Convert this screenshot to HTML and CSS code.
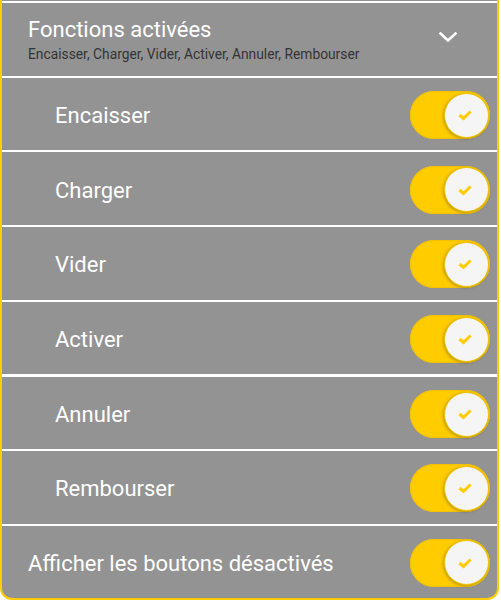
FILE: index.html
```html
<!DOCTYPE html>
<html lang="fr">
<head>
<meta charset="utf-8">
<link rel="stylesheet" href="styles.css">
</head>
<body>
<div class="panel">
  <div class="row header">
    <div class="head-text">
      <div class="title">Fonctions activées</div>
      <div class="subtitle">Encaisser, Charger, Vider, Activer, Annuler, Rembourser</div>
    </div>
    <svg class="chevron" width="24" height="24" viewBox="0 0 24 24"><path d="M4.5 8.5 L12 15.5 L19.5 8.5" fill="none" stroke="#fff" stroke-width="2.6" stroke-linecap="square"/></svg>
  </div>
  <div class="row sub"><span class="label">Encaisser</span><div class="toggle"><div class="thumb"><svg width="16" height="12" viewBox="0 0 16 12"><path d="M2.5 6 L6.5 9.5 L13.5 2.5" fill="none" stroke="#ffcc00" stroke-width="3"/></svg></div></div></div>
  <div class="row sub"><span class="label">Charger</span><div class="toggle"><div class="thumb"><svg width="16" height="12" viewBox="0 0 16 12"><path d="M2.5 6 L6.5 9.5 L13.5 2.5" fill="none" stroke="#ffcc00" stroke-width="3"/></svg></div></div></div>
  <div class="row sub"><span class="label">Vider</span><div class="toggle"><div class="thumb"><svg width="16" height="12" viewBox="0 0 16 12"><path d="M2.5 6 L6.5 9.5 L13.5 2.5" fill="none" stroke="#ffcc00" stroke-width="3"/></svg></div></div></div>
  <div class="row sub"><span class="label">Activer</span><div class="toggle"><div class="thumb"><svg width="16" height="12" viewBox="0 0 16 12"><path d="M2.5 6 L6.5 9.5 L13.5 2.5" fill="none" stroke="#ffcc00" stroke-width="3"/></svg></div></div></div>
  <div class="row sub thick"><span class="label">Annuler</span><div class="toggle"><div class="thumb"><svg width="16" height="12" viewBox="0 0 16 12"><path d="M2.5 6 L6.5 9.5 L13.5 2.5" fill="none" stroke="#ffcc00" stroke-width="3"/></svg></div></div></div>
  <div class="row sub"><span class="label">Rembourser</span><div class="toggle"><div class="thumb"><svg width="16" height="12" viewBox="0 0 16 12"><path d="M2.5 6 L6.5 9.5 L13.5 2.5" fill="none" stroke="#ffcc00" stroke-width="3"/></svg></div></div></div>
  <div class="row main"><span class="label">Afficher les boutons désactivés</span><div class="toggle"><div class="thumb"><svg width="16" height="12" viewBox="0 0 16 12"><path d="M2.5 6 L6.5 9.5 L13.5 2.5" fill="none" stroke="#ffcc00" stroke-width="3"/></svg></div></div></div>
</div>
</body>
</html>
```
FILE: styles.css
```css
html, body {
  margin: 0;
  padding: 0;
  background: #ffffff;
}
body {
  font-family: Roboto, "Noto Sans", sans-serif;
  color: #ffffff;
}
.panel {
  width: 495px;
  height: 597px;
  padding-top: 1px;
  background: #939393;
  border: 2px solid #ffcc00;
  border-top: none;
  border-radius: 0 0 12px 12px;
  overflow: hidden;
  display: flex;
  flex-direction: column;
}
.row {
  box-sizing: border-box;
  height: 74.7px;
  flex: none;
  border-top: 2px solid #ffffff;
  display: flex;
  align-items: center;
  justify-content: space-between;
  padding-right: 7px;
}
.row.thick {
  border-top-width: 3px;
}
.row.main {
  flex: 1 1 auto;
  padding-left: 26px;
}
.header {
  align-items: flex-start;
  padding-left: 26px;
}
.head-text {
  padding-top: 13.5px;
}
.title {
  font-size: 22px;
  line-height: 26px;
}
.subtitle {
  font-size: 13.8px;
  line-height: 17px;
  margin-top: 3.3px;
  color: #333333;
}
.chevron {
  margin-top: 22px;
  margin-right: 30px;
}
.sub {
  padding-left: 53px;
}
.label {
  font-size: 22px;
  line-height: 26px;
  margin-top: 4px;
}
.toggle {
  box-sizing: border-box;
  width: 80px;
  height: 48px;
  margin-top: 2px;
  border-radius: 24px;
  background: #ffcc00;
  display: flex;
  align-items: center;
  justify-content: flex-end;
  padding: 2px 1px;
  box-shadow: 0 0 0 1px #f2c200 inset;
}
.thumb {
  box-sizing: border-box;
  width: 45px;
  height: 45px;
  border-radius: 50%;
  background: #f5f5f5;
  border: 1.5px solid #efc000;
  box-shadow: -1px 1px 3px rgba(0, 0, 0, 0.25);
  display: flex;
  align-items: center;
  justify-content: center;
  padding-right: 3px;
}
```
